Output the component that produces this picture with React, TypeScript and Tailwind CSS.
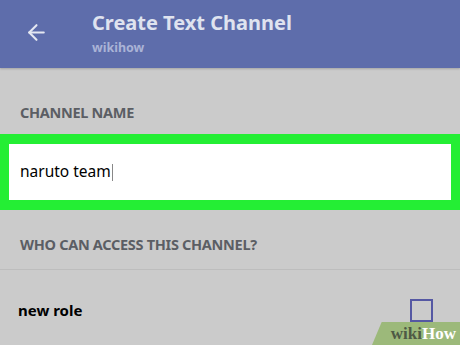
import {ArrowLeft} from 'lucide-react';

const App = () => {
    return (
        <div className="w-[460px] h-[345px] overflow-hidden bg-[#cbcbcb] relative font-['Noto_Sans',sans-serif]">
            <div className="h-[68px] bg-[#5e6dab] flex items-start shadow-[0_1px_2px_rgba(0,0,0,0.2)]">
                <div className="w-[92px] pl-[24px] pt-[20px] text-[#e4e7f1]">
                    <ArrowLeft size={25} strokeWidth={2}/>
                </div>
                <div className="pt-[10px]">
                    <p className="text-[20px] leading-[26px] font-bold text-[#dfe3ef]">Create Text Channel</p>
                    <p className="text-[12.5px] leading-[18px] font-bold text-[#aab3d6] mt-[3px]">wikihow</p>
                </div>
            </div>

            <div className="h-[66px] flex items-center pl-[20px] pt-[30px] pb-[6px]">
                <p className="text-[14.5px] font-bold text-[#5b5e64] tracking-[-0.3px]">CHANNEL NAME</p>
            </div>

            <div className="h-[76px] bg-[#24ee34] px-[9px] py-[10px]">
                <div className="h-full bg-white flex items-center pl-[11px]">
                    <span className="text-[15.5px] text-black">naruto team</span>
                    <span className="w-px h-[17px] bg-[#888] ml-[1px]"/>
                </div>
            </div>

            <div className="h-[60px] flex items-center pl-[20px] pt-[10px] border-b border-[#bdbdbd]">
                <p className="text-[14.5px] font-bold text-[#5b5e64] tracking-[-0.3px]">WHO CAN ACCESS THIS CHANNEL?</p>
            </div>

            <div className="h-[76px] flex items-start justify-between pl-[18px] pr-[27px] pt-[29px]">
                <p className="text-[15px] font-bold text-black">new role</p>
                <div className="w-[23px] h-[23px] border-2 border-[#5558a3]"/>
            </div>

            <div className="absolute right-0 bottom-0 w-[88px] h-[23px] bg-[#9cb97a] [clip-path:polygon(11%_0,100%_0,100%_100%,0_100%)] flex items-center justify-end pr-[4px]">
                <span className="font-['Liberation_Serif',serif] font-bold text-[17px] leading-none">
                    <span className="text-[#4e5a45]">wiki</span><span className="text-white">How</span>
                </span>
            </div>
        </div>
    );
};

export default App;
